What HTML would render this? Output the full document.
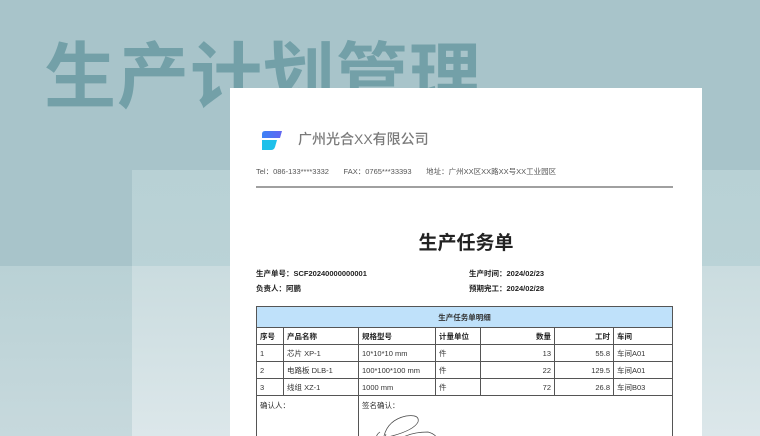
<!DOCTYPE html>
<html><head><meta charset="utf-8"><style>
*{margin:0;padding:0;box-sizing:border-box}
html,body{width:760px;height:436px;overflow:hidden}
body{background:#a8c4ca;position:relative;font-family:"Liberation Sans","Noto Sans CJK SC",sans-serif}
.r1{position:absolute;left:132px;top:170px;width:628px;height:266px;background:linear-gradient(#b8d1d5,#bfd6da)}
.band{position:absolute;left:0;top:266px;width:760px;height:170px;background:linear-gradient(#b9d1d5,#c7d9dd)}
.band2{position:absolute;left:132px;top:266px;width:628px;height:170px;background:linear-gradient(#cadcdf,#dce7ea)}
.big{position:absolute;left:44px;top:26px;font-size:72px;font-weight:bold;color:#73a0a8;letter-spacing:1px;line-height:90px;white-space:nowrap;font-family:"Noto Sans CJK SC",sans-serif}
.paper{position:absolute;left:230px;top:88px;width:472px;height:348px;background:#fff;overflow:hidden}
.abs{position:absolute;white-space:nowrap}
.co{left:68px;top:41px;font-size:14px;color:#7a7a7a;font-weight:500}
.tel{left:26px;top:78px;font-size:7.5px;color:#555}
.hr{left:26px;top:98px;width:417px;height:2px;background:#a0a0a0}
.title{left:0;width:472px;text-align:center;top:140px;font-size:19px;font-weight:bold;color:#222}
.info{font-size:7.5px;font-weight:bold;color:#222}
table{position:absolute;left:26px;top:218px;width:417px;border-collapse:collapse;font-size:7.5px;color:#333}
td{border:1px solid #555;height:17px;padding:0 3px}
.hd td{font-weight:bold;color:#222}
.cap td{background:#bfe1fa;text-align:center;font-weight:bold;height:21px}
.rt{text-align:right}
</style></head><body>
<div class="r1"></div><div class="band"></div><div class="band2"></div>
<div class="big">生产计划管理</div>
<div class="paper">
<svg class="abs" style="left:32px;top:43px" width="20" height="19" viewBox="0 0 20 19"><defs><linearGradient id="g" x1="0" x2="1"><stop offset="0" stop-color="#3b82f6"/><stop offset="1" stop-color="#6366f1"/></linearGradient></defs><path d="M0 3 Q0 0 3 0 H20 L18 7 H0 Z" fill="url(#g)"/><path d="M0 9 H15 L13 16 Q12 19 9 19 H0 Z" fill="#1ec0ea"/></svg>
<div class="abs co">广州光合XX有限公司</div>
<div class="abs tel">Tel：086-133****3332&nbsp;&nbsp;&nbsp;&nbsp;&nbsp;&nbsp;&nbsp;FAX：0765***33393&nbsp;&nbsp;&nbsp;&nbsp;&nbsp;&nbsp;&nbsp;地址：广州XX区XX路XX号XX工业园区</div>
<div class="abs hr"></div>
<div class="abs title">生产任务单</div>
<div class="abs info" style="left:26px;top:180px">生产单号：SCF20240000000001</div>
<div class="abs info" style="left:239px;top:180px">生产时间：2024/02/23</div>
<div class="abs info" style="left:26px;top:195px">负责人：阿鹏</div>
<div class="abs info" style="left:239px;top:195px">预期完工：2024/02/28</div>
<table>
<tr class="cap"><td colspan="7">生产任务单明细</td></tr>
<tr class="hd"><td style="width:27px">序号</td><td style="width:75px">产品名称</td><td style="width:77px">规格型号</td><td style="width:45px">计量单位</td><td class="rt" style="width:74px">数量</td><td class="rt" style="width:59px">工时</td><td>车间</td></tr>
<tr><td>1</td><td>芯片 XP-1</td><td>10*10*10 mm</td><td>件</td><td class="rt">13</td><td class="rt">55.8</td><td>车间A01</td></tr>
<tr><td>2</td><td>电路板 DLB-1</td><td>100*100*100 mm</td><td>件</td><td class="rt">22</td><td class="rt">129.5</td><td>车间A01</td></tr>
<tr><td>3</td><td>线组 XZ-1</td><td>1000 mm</td><td>件</td><td class="rt">72</td><td class="rt">26.8</td><td>车间B03</td></tr>
<tr><td colspan="2" style="height:60px;vertical-align:top;padding-top:4px">确认人：</td><td colspan="5" style="vertical-align:top;padding-top:4px">签名确认：</td></tr>
</table>
<svg class="abs" style="left:140px;top:318px" width="90" height="40" viewBox="0 0 90 40"><path d="M8 36 Q4 30 10 26 M14 30 Q18 14 36 10 Q50 8 48 16 Q44 24 22 30 Q14 32 16 28 M28 34 Q40 26 58 26 Q66 28 70 36 M30 34 Q44 30 56 32" fill="none" stroke="#444" stroke-width="0.7"/></svg>
</div>
</body></html>
